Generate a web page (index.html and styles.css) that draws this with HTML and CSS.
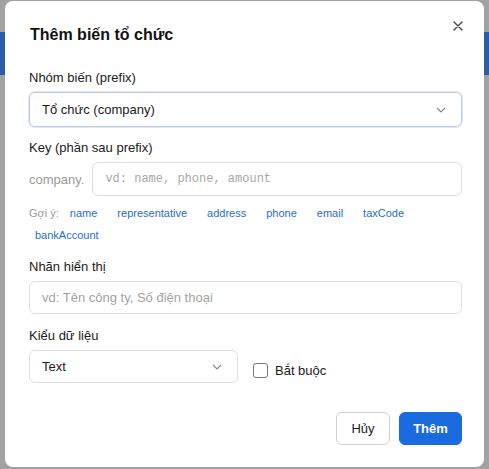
FILE: index.html
```html
<!DOCTYPE html>
<html lang="vi">
<head>
<meta charset="utf-8">
<title>Thêm biến tổ chức</title>
<link rel="stylesheet" href="styles.css">
</head>
<body>
<div class="backdrop">
  <div class="modal">
    <div class="modal-header">
      <h2 class="title">Thêm biến tổ chức</h2>
      <button class="close" aria-label="Đóng">
        <svg width="10" height="10" viewBox="0 0 10 10"><path d="M1 1L9 9M9 1L1 9" stroke="#444" stroke-width="1.4" stroke-linecap="round"/></svg>
      </button>
    </div>

    <div class="field">
      <label class="label">Nhóm biến (prefix)</label>
      <div class="select focus">
        <span>Tổ chức (company)</span>
        <svg class="chev" width="10" height="6" viewBox="0 0 10 6"><path d="M1 1l4 4 4-4" fill="none" stroke="#888" stroke-width="1.2"/></svg>
      </div>
    </div>

    <div class="field">
      <label class="label">Key (phần sau prefix)</label>
      <div class="key-row">
        <span class="prefix">company.</span>
        <div class="input mono">vd: name, phone, amount</div>
      </div>
      <div class="suggest">
        <span class="suggest-label">Gợi ý:</span>
        <span class="tag">name</span>
        <span class="tag">representative</span>
        <span class="tag">address</span>
        <span class="tag">phone</span>
        <span class="tag">email</span>
        <span class="tag">taxCode</span>
        <span class="tag">bankAccount</span>
      </div>
    </div>

    <div class="field">
      <label class="label">Nhãn hiển thị</label>
      <div class="input label-input">vd: Tên công ty, Số điện thoại</div>
    </div>

    <div class="field">
      <label class="label">Kiểu dữ liệu</label>
      <div class="type-row">
        <div class="select small">
          <span>Text</span>
          <svg class="chev" width="10" height="6" viewBox="0 0 10 6"><path d="M1 1l4 4 4-4" fill="none" stroke="#888" stroke-width="1.2"/></svg>
        </div>
        <label class="check"><span class="box"></span>Bắt buộc</label>
      </div>
    </div>

    <div class="actions">
      <button class="btn cancel">Hủy</button>
      <button class="btn primary">Thêm</button>
    </div>
  </div>
</div>
</body>
</html>
```
FILE: styles.css
```css
* { box-sizing: border-box; }
html, body { margin: 0; padding: 0; }
body {
  font-family: "Liberation Sans", Arial, sans-serif;
  color: #1a1a1a;
  background: linear-gradient(#a2a2a2 0, #a2a2a2 32px, #2c5ca6 32px, #2c5ca6 75px, #a2a2a2 75px);
  width: 489px;
  height: 469px;
  overflow: hidden;
}
.backdrop {
  padding: 1px 5px 0 5px;
}
.modal {
  background: #fff;
  border-radius: 8px;
  height: 466px;
  padding: 0 22px 0 24px;
  display: flex;
  flex-direction: column;
}
.modal-header {
  display: flex;
  justify-content: space-between;
  align-items: flex-start;
  padding-top: 24px;
  height: 69px;
}
.title {
  margin: 0;
  font-size: 16px;
  font-weight: 700;
  line-height: 20px;
  color: #111;
  padding-left: 1px;
}
.close {
  border: 0;
  background: none;
  padding: 0;
  margin-top: -4px;
  margin-right: -1px;
  width: 10px;
  height: 10px;
  display: flex;
}
.field { display: flex; flex-direction: column; }
.label {
  font-size: 13px;
  line-height: 16px;
  margin-bottom: 6px;
  color: #1a1a1a;
}
.select, .input {
  height: 34px;
  border: 1px solid #dedede;
  border-radius: 6px;
  display: flex;
  align-items: center;
  padding: 0 12px;
  font-size: 13px;
}
.select { justify-content: space-between; color: #1a1a1a; padding-right: 15px; }
.select.focus {
  height: 35px;
  border-color: #b9cbe6;
  box-shadow: 0 0 0 1px #dde7f5;
  margin-bottom: 13px;
}
.input { color: #a3a3a3; }
.key-row {
  display: flex;
  align-items: center;
  gap: 8px;
}
.prefix { color: #9a9a9a; font-size: 13px; }
.key-row .input { flex: 1; height: 34px; }
.mono { font-family: "Liberation Mono", "Courier New", monospace; font-size: 12px; color: #a8a8a8; }
.suggest {
  display: flex;
  flex-wrap: wrap;
  column-gap: 8px;
  margin-top: 6px;
  line-height: 22px;
  margin-bottom: 13px;
}
.suggest-label { color: #9a9a9a; font-size: 11px; margin-right: -3px; }
.tag {
  color: #1f6fd1;
  font-size: 11px;
  padding: 0 6px;
}
.label-input { height: 33px; margin-bottom: 14px; }
.type-row {
  display: flex;
  align-items: center;
  gap: 15px;
}
.select.small { width: 209px; height: 33px; }
.check {
  display: flex;
  align-items: center;
  gap: 7px;
  font-size: 13px;
  margin-top: 8px;
}
.box {
  width: 15px;
  height: 15px;
  border: 1px solid #777;
  border-radius: 3px;
  background: #fff;
}
.actions {
  display: flex;
  justify-content: flex-end;
  gap: 9px;
  margin-top: 29px;
}
.btn {
  height: 33px;
  border-radius: 6px;
  font-family: inherit;
  font-size: 13px;
  border: 1px solid #d0d0d0;
  background: #fff;
  color: #1a1a1a;
  padding: 0;
}
.btn.cancel { width: 54px; }
.btn.primary {
  width: 63px;
  background: #1a6be0;
  border-color: #1a6be0;
  color: #fff;
  font-weight: 700;
}
```
